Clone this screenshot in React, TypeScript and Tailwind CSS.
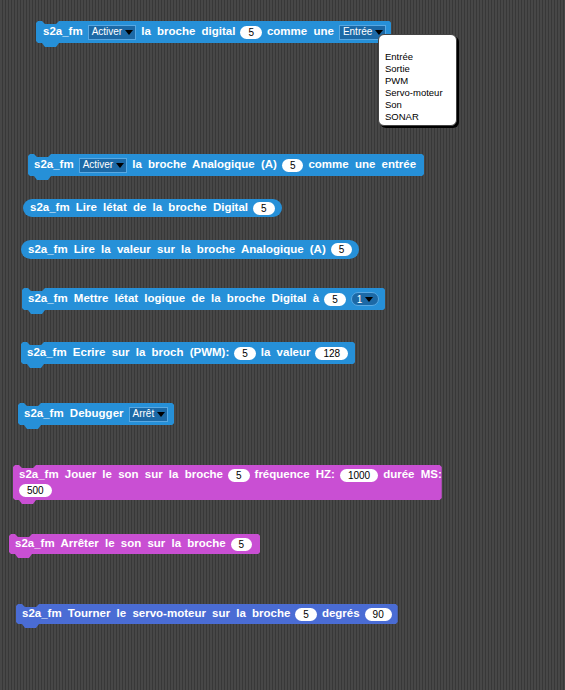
import type { ReactNode } from "react";

// scratch-like command block: top notch + bottom tab cut with clip-path
function Cmd({
    color,
    className,
    children,
}: {
    color: string;
    className: string;
    children: ReactNode;
}) {
    return (
        <div
            className={`${color} ${className} w-fit pb-[4px] [clip-path:polygon(0_2px,2px_0,6px_0,9px_3px,20px_3px,23px_0,calc(100%_-_2px)_0,100%_2px,100%_calc(100%_-_6px),calc(100%_-_2px)_calc(100%_-_4px),23px_calc(100%_-_4px),20px_100%,9px_100%,6px_calc(100%_-_4px),2px_calc(100%_-_4px),0_calc(100%_-_6px))]`}
        >
            {children}
        </div>
    );
}

function Row({ children, className }: { children: ReactNode; className: string }) {
    return (
        <div className={`flex items-center gap-x-[5px] text-white font-bold text-[11.5px] [word-spacing:3px] ${className}`}>
            {children}
        </div>
    );
}

function Num({ v }: { v: string }) {
    return (
        <span className="bg-white rounded-full px-2 h-[13px] leading-[13px] text-black font-normal text-[10px] [word-spacing:0]">
            {v}
        </span>
    );
}

function Tri() {
    return <span className="w-0 h-0 border-x-[4px] border-x-transparent border-t-[5px] border-t-black" />;
}

function Drop({ label }: { label: string }) {
    return (
        <span className="flex items-center h-[15px] pl-[3px] pr-[2px] gap-[3px] bg-[#1c69a6] border border-[#58a8e2] text-white font-normal text-[10px] leading-none">
            {label}
            <Tri />
        </span>
    );
}

export default function App() {
    const blue = "bg-[#2690d8]";
    return (
        <div className="relative w-[565px] h-[690px] overflow-hidden flex flex-col items-start pt-[21px] font-['Liberation_Sans',Arial,sans-serif] bg-[repeating-linear-gradient(90deg,#474747_0px,#474747_2px,#383838_2px,#383838_3px)]">
            <Cmd color={blue} className="ml-[36px]">
                <Row className="h-[22px] pl-[7px] pr-[5px]">
                    <span>s2a_fm</span>
                    <Drop label="Activer" />
                    <span>la broche digital</span>
                    <Num v="5" />
                    <span>comme une</span>
                    <Drop label="Entrée" />
                </Row>
            </Cmd>

            <Cmd color={blue} className="ml-[28px] mt-[107px]">
                <Row className="h-[22px] pl-[6px] pr-[8px]">
                    <span>s2a_fm</span>
                    <Drop label="Activer" />
                    <span>la broche Analogique (A)</span>
                    <Num v="5" />
                    <span>comme une entrée</span>
                </Row>
            </Cmd>

            <div className={`${blue} ml-[23px] mt-[19px] rounded-full`}>
                <Row className="h-[18px] pl-[7px] pr-[7px]">
                    <span>s2a_fm Lire létat de la broche Digital</span>
                    <Num v="5" />
                </Row>
            </div>

            <div className={`${blue} ml-[21px] mt-[23px] rounded-full`}>
                <Row className="h-[19px] pl-[7px] pr-[7px]">
                    <span>s2a_fm Lire la valeur sur la broche Analogique (A)</span>
                    <Num v="5" />
                </Row>
            </div>

            <Cmd color={blue} className="ml-[22px] mt-[29px]">
                <Row className="h-[22px] pl-[6px] pr-[6px]">
                    <span>s2a_fm Mettre létat logique de la broche Digital à</span>
                    <Num v="5" />
                    <span className="flex items-center gap-[3px] h-[14px] px-[5px] rounded-full bg-[#1c69a6] border border-[#58a8e2] text-white font-normal text-[10px]">
                        1
                        <Tri />
                    </span>
                </Row>
            </Cmd>

            <Cmd color={blue} className="ml-[21px] mt-[28px]">
                <Row className="h-[22px] pl-[6px] pr-[7px]">
                    <span>s2a_fm Ecrire sur la broch (PWM):</span>
                    <Num v="5" />
                    <span>la valeur</span>
                    <Num v="128" />
                </Row>
            </Cmd>

            <Cmd color={blue} className="ml-[18px] mt-[35px]">
                <Row className="h-[22px] pl-[6px] pr-[6px]">
                    <span>s2a_fm Debugger</span>
                    <Drop label="Arrêt" />
                </Row>
            </Cmd>

            <Cmd color="bg-[#c94fd3]" className="ml-[13px] mt-[36px] w-[432px]">
                <div className="flex flex-col justify-center h-[35px] pl-[6px] gap-[1px]">
                    <Row className="h-[14px]">
                        <span>s2a_fm Jouer le son sur la broche</span>
                        <Num v="5" />
                        <span>fréquence HZ:</span>
                        <Num v="1000" />
                        <span>durée MS:</span>
                    </Row>
                    <Row className="h-[14px]">
                        <Num v="500" />
                    </Row>
                </div>
            </Cmd>

            <Cmd color="bg-[#c94fd3]" className="ml-[9px] mt-[30px]">
                <Row className="h-[20px] pl-[6px] pr-[8px]">
                    <span>s2a_fm Arrêter le son sur la broche</span>
                    <Num v="5" />
                </Row>
            </Cmd>

            <Cmd color="bg-[#4a6cd4]" className="ml-[16px] mt-[46px]">
                <Row className="h-[20px] pl-[6px] pr-[6px]">
                    <span>s2a_fm Tourner le servo-moteur sur la broche</span>
                    <Num v="5" />
                    <span>degrés</span>
                    <Num v="90" />
                </Row>
            </Cmd>

            <div className="absolute left-[378px] top-[34px] w-[79px] h-[92px] pt-[16px] pl-[6px] bg-white rounded-[6px] border border-[#444] shadow-[2px_2px_0_#000] text-black text-[9.5px] leading-[12px] flex flex-col">
                <span>Entrée</span>
                <span>Sortie</span>
                <span>PWM</span>
                <span>Servo-moteur</span>
                <span>Son</span>
                <span>SONAR</span>
            </div>
        </div>
    );
}
